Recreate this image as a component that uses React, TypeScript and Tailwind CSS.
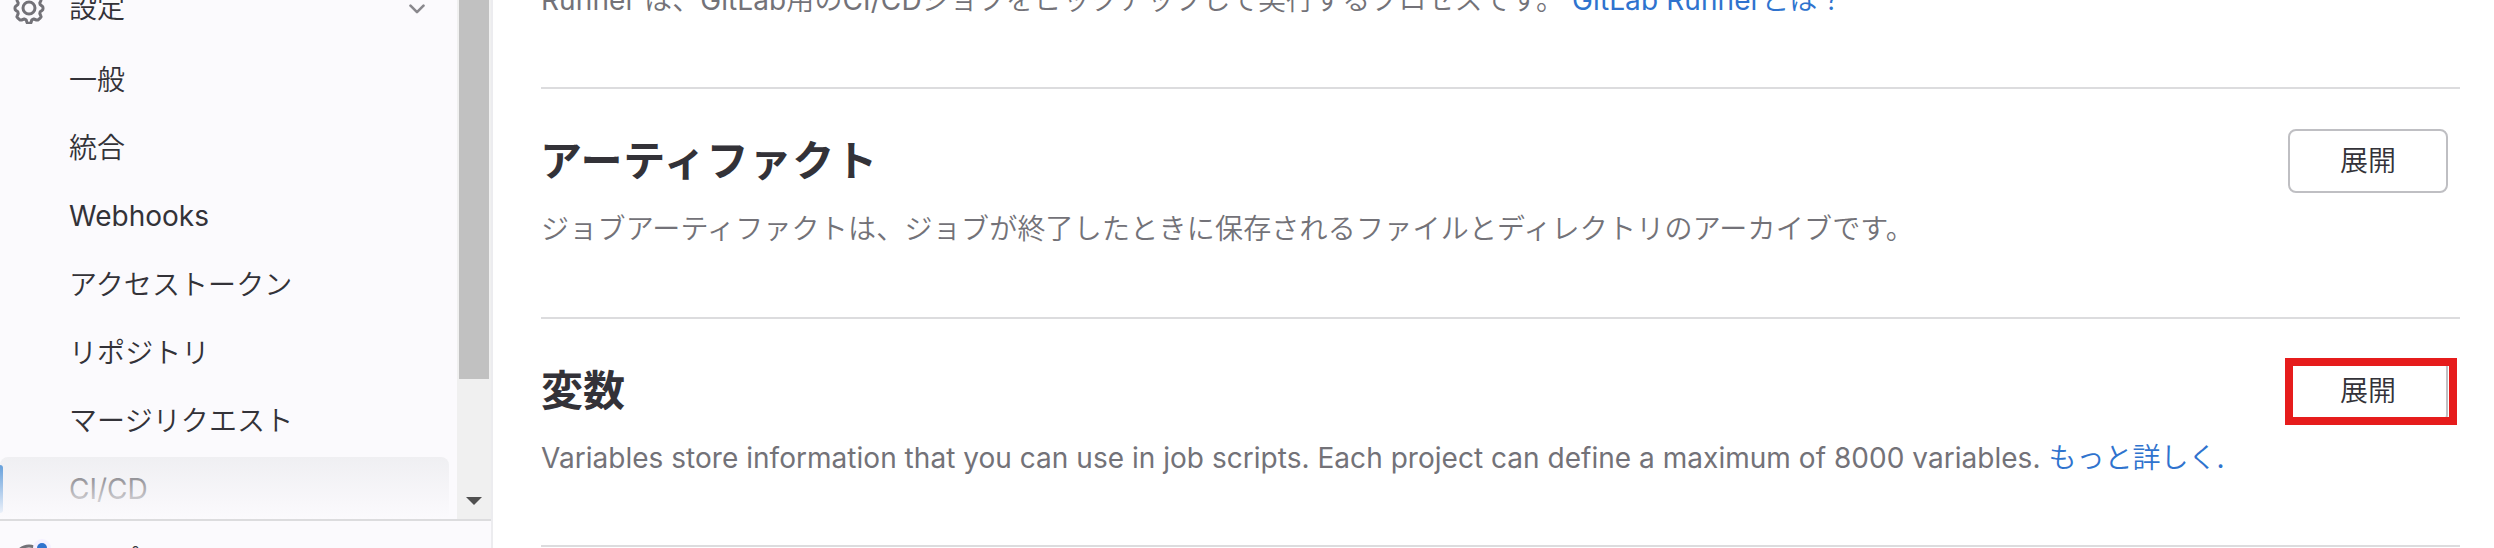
import { Fragment } from "react";

const items = ["一般", "統合", "Webhooks", "アクセストークン", "リポジトリ", "マージリクエスト"];

function GearIcon() {
  return (
    <svg viewBox="0 0 16 16" className="-mt-[2px] h-8 w-8 shrink-0" fill="none" stroke="#737278" strokeWidth="1.5" strokeLinejoin="round">
      <path d="M6.9 1.3c.1-.4.4-.6.8-.6h.6c.4 0 .7.2.8.6l.3 1.1 1 .4 1.3-.5c.4-.2.7-.1 1 .2l1 .9c.3.3.4.6.2 1l-.5 1 .2.9.9.7c.3.2.5.5.5.9v.5c0 .4-.2.7-.5.9l-.9.6-.2.9.5 1.1c.2.4.1.8-.2 1l-1 .9c-.3.3-.6.3-1 .2l-1.300-.5-1 .4-.3 1.100c-.1.4-.4.6-.8.6h-.6c-.4 0-.7-.2-.8-.6l-.3-1.100-1-.4-1.300.5c-.4.1-.7.100-1-.2l-1-.9c-.3-.2-.4-.6-.2-1l.5-1.100-.2-.9-.9-.6c-.3-.2-.5-.5-.5-.9v-.5c0-.4.2-.7.5-.9l.9-.7.2-.9-.5-1c-.2-.4-.1-.7.2-1l1-.9c.3-.3.6-.4 1-.2l1.300.5 1-.4z" />
      <circle cx="8" cy="8" r="3" />
    </svg>
  );
}

function Sidebar() {
  return (
    <aside className="flex h-[548px] w-[493px] shrink-0 flex-col overflow-hidden border-r-2 border-[#ececef] bg-[#fbfafd] text-[#333238]">
      <div className="flex h-[519px] shrink-0">
        <nav className="relative w-[457px] overflow-hidden">
          <div className="-mt-[23px] flex h-16 w-[449px] items-center pl-[13px]">
            <GearIcon />
            <span className="ml-6 flex-1 pb-[2px] font-[350]">設定</span>
            <svg viewBox="0 0 16 10" className="mr-6 mt-[-1px] h-[10px] w-4" fill="none" stroke="#89888d" strokeWidth="2.6" strokeLinecap="round" strokeLinejoin="round">
              <path d="M1.500 1.700 8 8.200 14.500 1.700" />
            </svg>
          </div>
          <ul className="mt-2 flex flex-col gap-1">
            {items.map((t, i) => (
              <li key={t} className={t === "Webhooks" ? "flex h-16 items-center pb-[2px] pl-[69px]" : i > 2 ? "flex h-16 items-center pl-[69px] font-[350] tracking-[0.1px]" : "flex h-16 items-center pb-[2px] pl-[69px] font-[350]"}>{t}</li>
            ))}
            <li className="relative flex h-16 w-[449px] items-center rounded-lg bg-[#ececef] pb-px pl-[69px]">
              <span className="absolute top-2 left-0 h-12 w-[3px] rounded-r-sm bg-[#1f75cb]" />
              CI/CD
            </li>
          </ul>
          <div className="absolute bottom-0 left-0 h-[80px] w-full bg-linear-to-b from-[#fbfafd]/0 to-[#fbfafd]" />
        </nav>
        <div className="flex w-[34px] flex-col items-center justify-between bg-[#f0f0f0] pb-[14px]">
          <div className="h-[379px] w-[30px] bg-[#c1c1c1]" />
          <svg viewBox="0 0 16 8" className="h-2 w-4" fill="#505050">
            <path d="M0 0h16L8 8z" />
          </svg>
        </div>
      </div>
      <div className="h-[2px] shrink-0 bg-[#dcdcde]" />
      <div className="relative flex shrink-0 items-center pt-[18px] pl-[14px]">
        <svg viewBox="0 0 36 36" className="mt-[2px] h-9 w-9 shrink-0 overflow-visible" fill="none">
          <circle cx="15" cy="17" r="14" stroke="#737278" strokeWidth="3" />
          <circle cx="28" cy="5" r="9" fill="#f4f0ff" />
          <circle cx="28" cy="5" r="5" fill="#2f73ce" />
        </svg>
        <span className="ml-[5px] leading-[42px] font-[350]">ヘルプ</span>
      </div>
    </aside>
  );
}

const sections = [
  { title: "アーティファクト", text: "ジョブアーティファクトは、ジョブが終了したときに保存されるファイルとディレクトリのアーカイブです。", link: "", marked: false },
  { title: "変数", text: "Variables store information that you can use in job scripts. Each project can define a maximum of 8000 variables. ", link: "もっと詳しく", marked: true },
];

export default function App() {
  return (
    <div className="flex h-[548px] w-[2494px] overflow-hidden bg-white font-['Inter','Noto_Sans_CJK_JP',sans-serif] text-[28px] leading-[40px]">
      <Sidebar />
      <main className="ml-12 w-[1919px] shrink-0 text-[#737278]">
        <p className="-mt-5 h-[107px] tracking-[0.09px] whitespace-nowrap">
          Runner <span className="font-[350]">は、</span>GitLab<span className="font-[350]">用の</span>CI/CD
          <span className="font-[350]">ジョブをピックアップして実行するプロセスです。</span>{" "}
          <a className="text-[#2f73ce]">GitLab Runner<span className="font-[350]">とは？</span></a>
        </p>
        {sections.map((s) => (
          <Fragment key={s.title}>
            <section className={s.marked ? "flex h-[228px] justify-between border-t-2 border-[#dcdcde] pt-10 pr-3" : "flex h-[230px] justify-between border-t-2 border-[#dcdcde] pt-10 pr-3"}>
              <div className="whitespace-nowrap">
                <h2 className={s.marked ? "text-[42px] leading-[64px] font-semibold text-[#333238]" : "-ml-px text-[42px] leading-[64px] font-semibold tracking-[0.9px] text-[#333238]"}>{s.title}</h2>
                <p className={s.marked ? "mt-[15px] tracking-[0.03px]" : "mt-4 font-[350] tracking-[0.22px]"}>
                  {s.text}
                  {s.link && <a className="text-[#2f73ce]"><span className="font-[350]">{s.link}</span>.</a>}
                </p>
              </div>
              <div className="relative h-16">
                <button className="h-16 w-40 rounded-lg border-2 border-[#bfbfc3] bg-white font-[350] text-[#333238]">展開</button>
                {s.marked && <span className="absolute -top-[1px] -left-[3px] h-[67px] w-[172px] border-8 border-[#e61c1c]" />}
              </div>
            </section>
          </Fragment>
        ))}
        <div className="border-t-2 border-[#dcdcde]" />
      </main>
    </div>
  );
}
